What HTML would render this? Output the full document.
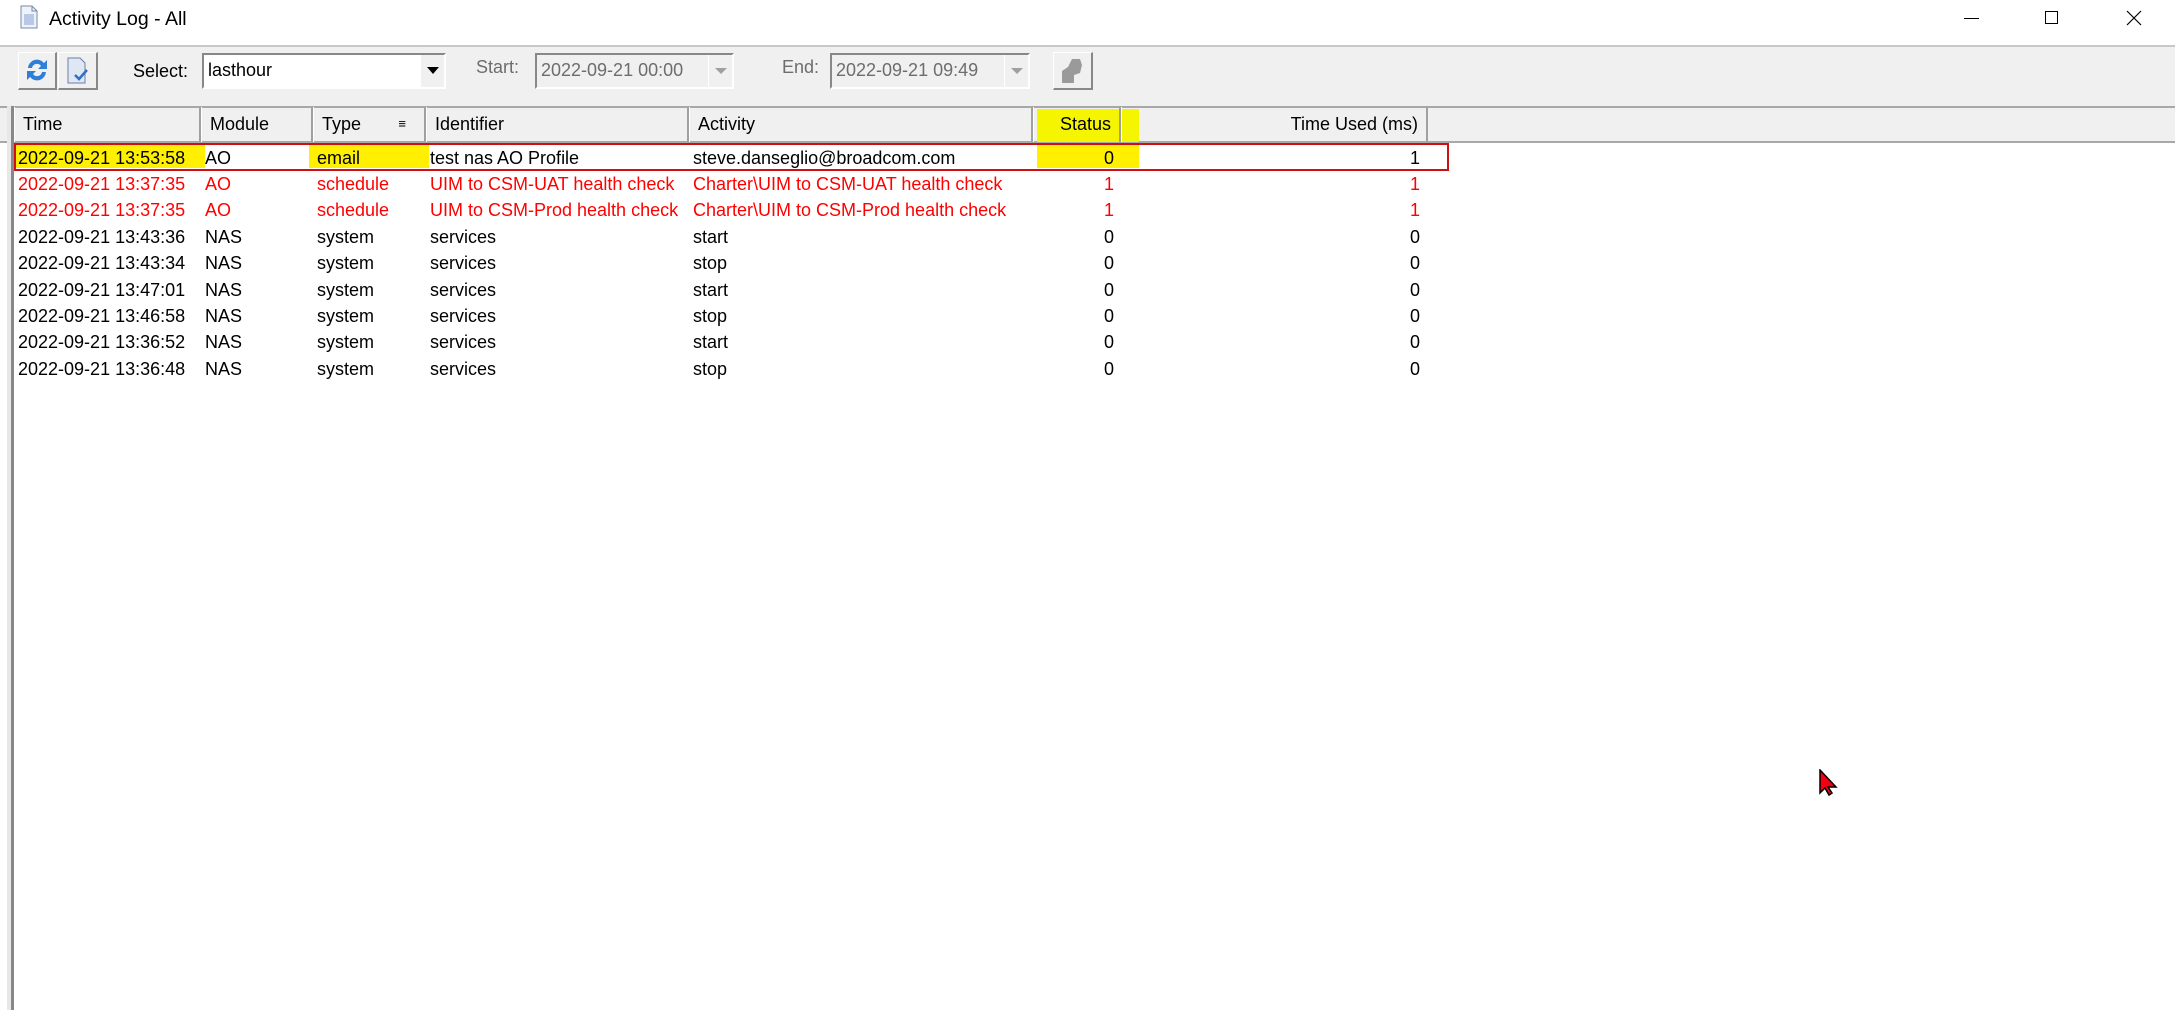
<!DOCTYPE html>
<html><head><meta charset="utf-8"><style>
*{margin:0;padding:0;box-sizing:border-box}
body{width:2175px;height:1010px;background:#fff;position:relative;overflow:hidden;font-family:"Liberation Sans",sans-serif;color:#000}
.a{position:absolute;white-space:nowrap}
.t{font-size:18px;line-height:26px}
.hd{position:absolute;top:107px;height:35px;border-right:2px solid #a0a0a0;border-left:1px solid #fff;font-size:18px;line-height:34px;padding:0 8px;color:#000}
.btn{position:absolute;top:52px;height:38px;background:#f0f0f0;border:1px solid #fff;border-right:2px solid #888;border-bottom:2px solid #888}
.box{position:absolute;top:53px;height:36px;border:2px solid #888;border-right-color:#fff;border-bottom-color:#fff;font-size:18px;line-height:31px;padding-left:4px}
.red{color:#f00}
.r{text-align:right}
</style></head><body>
<svg class="a" style="left:20px;top:5px" width="18" height="24" viewBox="0 0 18 24"><path d="M1 1h11l5 5v17H1z" fill="#eef2fa" stroke="#7a8aa8"/><path d="M12 1v5h5" fill="none" stroke="#7a8aa8"/><rect x="4" y="9" width="10" height="11" fill="#b9c8e6"/></svg>
<div class="a" style="left:49px;top:6px;font-size:19.5px;line-height:26px">Activity Log - All</div>
<div class="a" style="left:1964px;top:18px;width:15px;height:1px;background:#000"></div>
<div class="a" style="left:2045px;top:11px;width:13px;height:13px;border:1px solid #000"></div>
<svg class="a" style="left:2126px;top:10px" width="16" height="16"><path d="M1 1L15 15M15 1L1 15" stroke="#000" stroke-width="1.2"/></svg>
<div class="a" style="left:0;top:45px;width:2175px;height:62px;background:#f0f0f0;border-top:2px solid #c8c8c8"></div>
<div class="btn" style="left:18px;width:39px"><svg width="36" height="34" viewBox="0 0 36 34"><path d="M9 15a9 9 0 0 1 16-5l3-3v9h-9l3-3a5 5 0 0 0-9 2z" fill="#2f7fd8"/><path d="M27 19a9 9 0 0 1-16 5l-3 3v-9h9l-3 3a5 5 0 0 0 9-2z" fill="#2f7fd8"/></svg></div>
<div class="btn" style="left:58px;width:40px"><svg width="36" height="34" viewBox="0 0 36 34"><path d="M9 5h12l5 5v20H9z" fill="#dfe7f5" stroke="#6a7fa8"/><path d="M16 22l4 4 8-9" fill="none" stroke="#2f6fc8" stroke-width="2.5"/></svg></div>
<div class="a t" style="left:133px;top:58px">Select:</div>
<div class="box" style="left:202px;width:244px;background:#fff">lasthour<div style="position:absolute;right:0;top:0;width:24px;height:32px;background:#f0f0f0;border-left:1px solid #fff"><div style="margin:12px auto 0;width:0;height:0;border-left:6px solid transparent;border-right:6px solid transparent;border-top:7px solid #000"></div></div></div>
<div class="a t" style="left:476px;top:54px;color:#6d6d6d">Start:</div>
<div class="box" style="left:535px;width:199px;color:#6d6d6d">2022-09-21 00:00<div style="position:absolute;right:0;top:0;width:24px;height:32px;border-left:1px solid #fff"><div style="margin:13px auto 0;width:0;height:0;border-left:6px solid transparent;border-right:6px solid transparent;border-top:6px solid #a0a0a0"></div></div></div>
<div class="a t" style="left:782px;top:54px;color:#6d6d6d">End:</div>
<div class="box" style="left:830px;width:200px;color:#6d6d6d">2022-09-21 09:49<div style="position:absolute;right:0;top:0;width:24px;height:32px;border-left:1px solid #fff"><div style="margin:13px auto 0;width:0;height:0;border-left:6px solid transparent;border-right:6px solid transparent;border-top:6px solid #a0a0a0"></div></div></div>
<div class="btn" style="left:1053px;width:40px"><svg width="36" height="34" viewBox="0 0 36 34"><path d="M8 30V18l6-4 4-8h8l2 6-2 8-6 2v8z" fill="#9a9a9a"/></svg></div>
<div class="a" style="left:0;top:106px;width:2175px;height:37px;background:#f0f0f0;border-top:2px solid #a8a8a8;border-bottom:2px solid #a8a8a8"></div>
<div class="a" style="left:7px;top:106px;width:4px;height:904px;background:#e8e8e8"></div>
<div class="a" style="left:11px;top:106px;width:3px;height:904px;background:#888"></div>
<div class="hd" style="left:14px;width:187px">Time</div>
<div class="hd" style="left:201px;width:112px">Module</div>
<div class="hd" style="left:313px;width:113px">Type<span style="position:absolute;right:18px;top:0;font-size:13px">&#8801;</span></div>
<div class="hd" style="left:426px;width:263px">Identifier</div>
<div class="hd" style="left:689px;width:344px">Activity</div>
<div class="a" style="left:1037px;top:109px;width:102px;height:33px;background:#f5f500"></div>
<div class="hd r" style="left:1033px;width:88px">Status</div>
<div class="hd r" style="left:1121px;width:307px">Time Used (ms)</div>
<div class="a" style="left:16px;top:145px;width:189px;height:23px;background:#ffef00"></div>
<div class="a" style="left:309px;top:145px;width:120px;height:23px;background:#ffef00"></div>
<div class="a" style="left:1037px;top:145px;width:102px;height:23px;background:#ffef00"></div>
<div class="a" style="left:14px;top:143px;width:1435px;height:28px;border:2px solid #d01010"></div>
<div class="a t" style="top:145px;left:18px">2022-09-21 13:53:58</div>
<div class="a t" style="top:145px;left:205px">AO</div>
<div class="a t" style="top:145px;left:317px">email</div>
<div class="a t" style="top:145px;left:430px">test nas AO Profile</div>
<div class="a t" style="top:145px;left:693px">steve.danseglio@broadcom.com</div>
<div class="a t r" style="top:145px;left:1033px;width:81px">0</div>
<div class="a t r" style="top:145px;left:1121px;width:299px">1</div>
<div class="a t red" style="top:171px;left:18px">2022-09-21 13:37:35</div>
<div class="a t red" style="top:171px;left:205px">AO</div>
<div class="a t red" style="top:171px;left:317px">schedule</div>
<div class="a t red" style="top:171px;left:430px;width:257px;overflow:hidden">UIM to CSM-UAT health check</div>
<div class="a t red" style="top:171px;left:693px">Charter\UIM to CSM-UAT health check</div>
<div class="a t red r" style="top:171px;left:1033px;width:81px">1</div>
<div class="a t red r" style="top:171px;left:1121px;width:299px">1</div>
<div class="a t red" style="top:197px;left:18px">2022-09-21 13:37:35</div>
<div class="a t red" style="top:197px;left:205px">AO</div>
<div class="a t red" style="top:197px;left:317px">schedule</div>
<div class="a t red" style="top:197px;left:430px;width:257px;overflow:hidden">UIM to CSM-Prod health check</div>
<div class="a t red" style="top:197px;left:693px">Charter\UIM to CSM-Prod health check</div>
<div class="a t red r" style="top:197px;left:1033px;width:81px">1</div>
<div class="a t red r" style="top:197px;left:1121px;width:299px">1</div>
<div class="a t" style="top:224px;left:18px">2022-09-21 13:43:36</div><div class="a t" style="top:224px;left:205px">NAS</div><div class="a t" style="top:224px;left:317px">system</div><div class="a t" style="top:224px;left:430px">services</div><div class="a t" style="top:224px;left:693px">start</div><div class="a t r" style="top:224px;left:1033px;width:81px">0</div><div class="a t r" style="top:224px;left:1121px;width:299px">0</div>
<div class="a t" style="top:250px;left:18px">2022-09-21 13:43:34</div><div class="a t" style="top:250px;left:205px">NAS</div><div class="a t" style="top:250px;left:317px">system</div><div class="a t" style="top:250px;left:430px">services</div><div class="a t" style="top:250px;left:693px">stop</div><div class="a t r" style="top:250px;left:1033px;width:81px">0</div><div class="a t r" style="top:250px;left:1121px;width:299px">0</div>
<div class="a t" style="top:277px;left:18px">2022-09-21 13:47:01</div><div class="a t" style="top:277px;left:205px">NAS</div><div class="a t" style="top:277px;left:317px">system</div><div class="a t" style="top:277px;left:430px">services</div><div class="a t" style="top:277px;left:693px">start</div><div class="a t r" style="top:277px;left:1033px;width:81px">0</div><div class="a t r" style="top:277px;left:1121px;width:299px">0</div>
<div class="a t" style="top:303px;left:18px">2022-09-21 13:46:58</div><div class="a t" style="top:303px;left:205px">NAS</div><div class="a t" style="top:303px;left:317px">system</div><div class="a t" style="top:303px;left:430px">services</div><div class="a t" style="top:303px;left:693px">stop</div><div class="a t r" style="top:303px;left:1033px;width:81px">0</div><div class="a t r" style="top:303px;left:1121px;width:299px">0</div>
<div class="a t" style="top:329px;left:18px">2022-09-21 13:36:52</div><div class="a t" style="top:329px;left:205px">NAS</div><div class="a t" style="top:329px;left:317px">system</div><div class="a t" style="top:329px;left:430px">services</div><div class="a t" style="top:329px;left:693px">start</div><div class="a t r" style="top:329px;left:1033px;width:81px">0</div><div class="a t r" style="top:329px;left:1121px;width:299px">0</div>
<div class="a t" style="top:356px;left:18px">2022-09-21 13:36:48</div><div class="a t" style="top:356px;left:205px">NAS</div><div class="a t" style="top:356px;left:317px">system</div><div class="a t" style="top:356px;left:430px">services</div><div class="a t" style="top:356px;left:693px">stop</div><div class="a t r" style="top:356px;left:1033px;width:81px">0</div><div class="a t r" style="top:356px;left:1121px;width:299px">0</div>
<svg class="a" style="left:1819px;top:769px" width="20" height="28" viewBox="0 0 20 28"><path d="M1 1v23l5-5 4 7 3-2-4-6h8z" fill="#f00010" stroke="#000" stroke-width="1.5"/></svg>
</body></html>
